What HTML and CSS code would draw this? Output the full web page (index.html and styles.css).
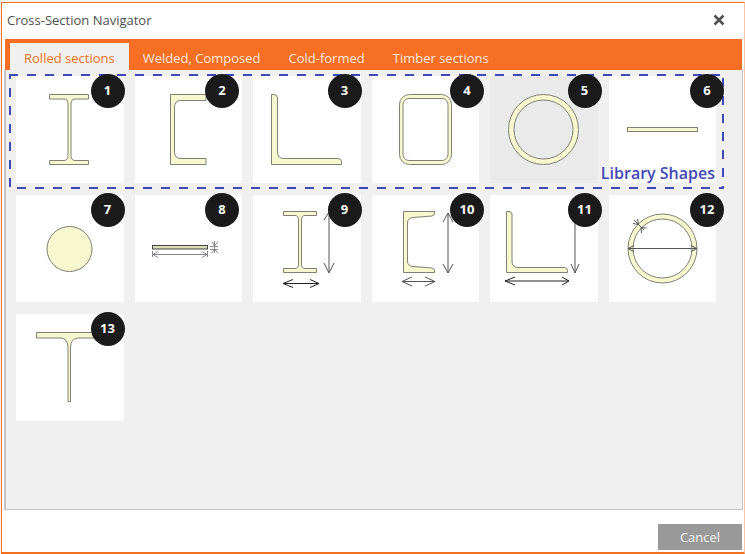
FILE: index.html
```html
<!DOCTYPE html>
<html lang="en">
<head>
<meta charset="utf-8">
<title>Cross-Section Navigator</title>
<link rel="stylesheet" href="styles.css">
</head>
<body>
<main class="dialog">
  <header class="titlebar">
    <h1 class="title">Cross-Section Navigator</h1>
    <button class="close" type="button" aria-label="Close">
      <svg width="12" height="12" viewBox="0 0 12 12"><path d="M1.5 1.5 L10.5 10.5 M10.5 1.5 L1.5 10.5"/></svg>
    </button>
  </header>
  <nav class="tabs">
    <button class="tab selected" type="button">Rolled sections</button>
    <button class="tab" type="button">Welded, Composed</button>
    <button class="tab" type="button">Cold-formed</button>
    <button class="tab" type="button">Timber sections</button>
  </nav>
  <section class="panel">
    <div class="tiles">
      <button class="tile" type="button">
        <svg class="shape" viewBox="0 0 107 107"><path d="M33.5 18.5H72.5V23H59Q55 23 55 28V79.500Q55 84.500 59 84.500H72.500V88.500H33.500V84.500H48Q52 84.500 52 79.500V28Q52 23 48 23H33.500Z"/></svg>
        <span class="badge">1</span>
      </button>
      <button class="tile" type="button">
        <svg class="shape" viewBox="0 0 107 107"><path d="M35.500 18.500H71V24.500H46Q39.500 24.500 39.500 31V76Q39.500 82.500 46 82.500H71V88.500H35.500Z"/></svg>
        <span class="badge">2</span>
      </button>
      <button class="tile" type="button">
        <svg class="shape" viewBox="0 0 107 107"><path d="M18.500 18.500H21Q24.500 18.500 24.500 22V76Q24.500 82.500 31 82.500H85Q88.500 82.500 88.500 86V88.500H18.500Z"/></svg>
        <span class="badge">3</span>
      </button>
      <button class="tile" type="button">
        <svg class="shape" viewBox="0 0 107 107"><rect x="27.500" y="18.500" width="52" height="70" rx="10"/><rect class="hole" x="31" y="22.500" width="45" height="62" rx="6"/></svg>
        <span class="badge">4</span>
      </button>
      <button class="tile hovered" type="button">
        <svg class="shape" viewBox="0 0 107 107"><circle cx="53.500" cy="53.500" r="35"/><circle class="hole" cx="53.500" cy="53.500" r="29.500"/></svg>
        <span class="badge">5</span>
      </button>
      <button class="tile" type="button">
        <svg class="shape" viewBox="0 0 107 107"><rect x="18.500" y="51.500" width="70" height="4"/></svg>
        <span class="badge">6</span>
      </button>
      <button class="tile" type="button">
        <svg class="shape" viewBox="0 0 107 107"><circle cx="53.500" cy="54" r="22.500"/></svg>
        <span class="badge">7</span>
      </button>
      <button class="tile" type="button">
        <svg class="shape" viewBox="0 0 107 107"><rect class="plate" x="17.500" y="50.500" width="55" height="3.500"/><path class="thin" d="M17.500 56V62M72.500 56V62M18 59.500H72M23 56.500L18 59.500L23 62.500M67 56.500L72 59.500L67 62.500M75 51.500H83M75 54.500H83M79.500 46V58M77 47L79.500 51L83 46.500M76.500 58L79.500 54.500L83 58"/></svg>
        <span class="badge">8</span>
      </button>
      <button class="tile" type="button">
        <svg class="shape" viewBox="0 0 107 107"><path d="M30.500 16.500H63.500V20.500H52Q48.500 20.500 48.500 25V69Q48.500 73.500 52 73.500H63.500V77.500H30.500V73.500H42Q45.500 73.500 45.500 69V25Q45.500 20.500 42 20.500H30.500Z"/><path class="dim" d="M76 17V77M71 25L76 17L81 25M71 68L76 78L81 68"/><path class="dim dark" d="M30 88.500H66M40 84.500L30 88.500L40 92.500M57 84.500L66 88.500L57 92.500"/></svg>
        <span class="badge">9</span>
      </button>
      <button class="tile" type="button">
        <svg class="shape" viewBox="0 0 107 107"><path d="M31.500 16.500H62.500V18Q62.500 20.500 60 21L41 22.500Q35.500 23 35.500 28V66Q35.500 71 41 71.500L60 73Q62.500 73.500 62.500 76V77.500H31.500Z"/><path class="dim" d="M76 18V78M71 27L76 18L81 27M71 69L76 78L81 69M30 86.500H63M40 82L30 86.500L40 91M53 82L63 86.500L53 91"/></svg>
        <span class="badge">10</span>
      </button>
      <button class="tile" type="button">
        <svg class="shape" viewBox="0 0 107 107"><path d="M16.500 16.500H19Q22 16.500 22 19.500V66Q22 72.500 28 72.500H74.500Q77.500 72.500 77.500 75.500V77.500H16.500Z"/><path class="dim" d="M85 20V78M81 69L85 78L89 69"/><path class="dim dark" d="M15 86H79M25 82L15 86L25 90M72 82L79 86L72 90"/></svg>
        <span class="badge">11</span>
      </button>
      <button class="tile" type="button">
        <svg class="shape" viewBox="0 0 107 107"><circle cx="53.500" cy="53.500" r="34.500"/><circle class="hole" cx="53.500" cy="53.500" r="29.500"/><path class="dim" d="M19 53.500H88M25 50.500L19 53.500L25 56.500M82 50.500L88 53.500L82 56.500M25 25L35 35M24 28.500L29.500 29.500L28.500 24M32.500 38L32 32.500L37.500 33"/></svg>
        <span class="badge">12</span>
      </button>
      <button class="tile" type="button">
        <svg class="shape" viewBox="0 0 107 107"><path d="M20.500 18.500H86.500V24H62Q55 24.500 54.500 33V87.500H52V33Q51.500 24.500 45 24H20.500Z"/></svg>
        <span class="badge">13</span>
      </button>
    </div>
    <div class="callout">
      <svg class="dashes" width="100%" height="100%">
        <line x1="0" y1="1" x2="100%" y2="1"/>
        <line class="left" x1="1" y1="0" x2="1" y2="100%"/>
        <line class="right" x1="100%" y1="4" x2="100%" y2="100%"/>
        <line class="bottom" x1="8" y1="100%" x2="100%" y2="100%"/>
      </svg>
      <span class="callout-label">Library Shapes</span>
    </div>
  </section>
  <footer class="footer">
    <button class="cancel" type="button">Cancel</button>
  </footer>
</main>
</body>
</html>
```
FILE: styles.css
```css
* {
  box-sizing: border-box;
}

body {
  margin: 0;
  padding: 2px 0 0 1px;
  min-height: 100vh;
  display: flex;
  background: #f3f3f3;
  font-family: "Open Sans", sans-serif;
  font-size: 13px;
}

button {
  border: 0;
  padding: 0;
  background: none;
  font: inherit;
  color: inherit;
}

.dialog {
  flex: 1;
  display: flex;
  flex-direction: column;
  background: #fff;
  border: 1px solid #f37021;
  border-right-color: #f9c3a5;
  border-bottom-width: 2px;
}

.titlebar {
  height: 36px;
  display: flex;
  align-items: center;
  justify-content: space-between;
  padding: 0 19px 2px 5px;
}

.title {
  margin: 0;
  font-size: 13px;
  font-weight: 400;
  color: #505050;
}

.close {
  display: flex;
}

.close svg {
  fill: none;
  stroke: #505050;
  stroke-width: 2.5;
}

.tabs {
  height: 31px;
  display: flex;
  align-items: flex-end;
  margin: 0 2px 0 3px;
  padding-left: 5px;
  background: #f66f24;
}

.tab {
  height: 27px;
  padding: 2px 14px 0;
  color: #fde9dd;
}

.tab.selected {
  background: #f0f0f0;
  color: #f37021;
}

.panel {
  flex: 1;
  position: relative;
  margin: 0 1px 0 2px;
  padding: 6px 26px 12px 10px;
  background: #f0f0f0;
  border: 1px solid #c4c3c5;
  border-top: 0;
  border-left-width: 2px;
}

.tiles {
  display: grid;
  grid-template-columns: repeat(6, minmax(0, 1fr));
  gap: 12px 11px;
}

.tile {
  position: relative;
  height: 107px;
  display: flex;
  justify-content: center;
  background: #fff;
}

.tile.hovered {
  background: #eaeaea;
}

.shape {
  width: 107px;
  height: 107px;
  flex: none;
  fill: #f8f8d0;
  stroke: #808074;
  stroke-width: 1;
}

.shape .hole {
  fill: #fff;
}

.hovered .hole {
  fill: #eaeaea;
}

.shape .plate {
  fill: #dcdcb8;
  stroke: #444;
}

.shape .thin {
  fill: none;
  stroke: #888;
}

.shape .dim {
  fill: none;
  stroke: #555;
}

.shape .dark {
  stroke: #222;
}

.badge {
  position: absolute;
  z-index: 2;
  top: -2px;
  right: -1px;
  width: 34px;
  height: 34px;
  border-radius: 50%;
  background: #1a1a1a;
  color: #fff;
  font-size: 13px;
  font-weight: 700;
  line-height: 32px;
  text-align: center;
}

.tile:nth-child(6n + 2) .badge {
  right: 3px;
}

.tile:nth-child(6n + 4) .badge {
  right: -5px;
}

.tile:nth-child(6n + 5) .badge {
  right: -4px;
}

.tile:nth-child(6n) .badge {
  right: -8px;
}

.callout {
  position: absolute;
  top: 4px;
  left: 3px;
  right: 18px;
  height: 115px;
  display: flex;
  align-items: flex-end;
  justify-content: flex-end;
  padding: 0 9px 5px 0;
  color: #3f48b5;
  pointer-events: none;
}

.dashes {
  position: absolute;
  inset: 0;
  stroke: #3f48b5;
  stroke-width: 2;
  stroke-dasharray: 9 9;
}

.left {
  stroke-dashoffset: 4px;
}

.right {
  transform: translateX(-1px);
}

.bottom {
  transform: translateY(-1px);
}

.callout-label {
  font-size: 16px;
  font-weight: 600;
  line-height: 22px;
}

.footer {
  display: flex;
  justify-content: flex-end;
  padding: 14px 2px 2px;
}

.cancel {
  width: 84px;
  height: 26px;
  background: #999;
  color: #f4f4f4;
}
```
